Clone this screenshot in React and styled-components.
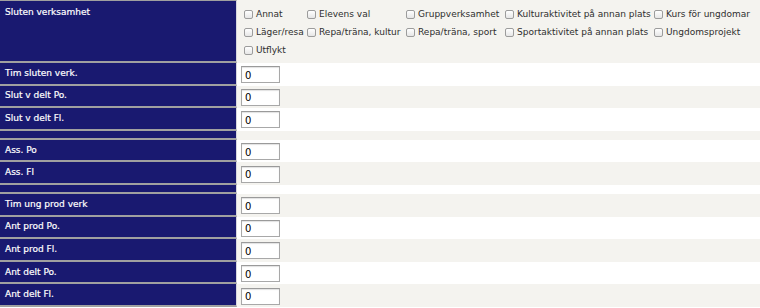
import styled, { createGlobalStyle } from 'styled-components';

// midnightblue label column, alternating field rows

const GlobalStyle = createGlobalStyle`
  body {
    margin: 0;
    background: #ffffff;
    font-family: "DejaVu Sans", Verdana, sans-serif;
  }
`;

const Form = styled.div`
  display: flex;
  flex-direction: column;
  width: 760px;
`;

const Row = styled.div`
  display: flex;
  height: ${(p) => p.$h}px;
  background: ${(p) => (p.$shade ? '#f4f3ef' : '#ffffff')};
`;

const Label = styled.div`
  box-sizing: border-box;
  display: flex;
  align-items: ${(p) => (p.$top ? 'flex-start' : 'center')};
  width: 237px;
  flex-shrink: 0;
  padding: ${(p) => (p.$top ? '6px' : '0')} 0 0 5px;
  background: #191970;
  color: #ffffff;
  font-size: 9px;
  line-height: 11px;
  -webkit-text-stroke: 0.2px #ffffff;
  border-top: ${(p) => (p.$first ? '1px solid #a0a0a0' : 'none')};
  border-bottom: 2px solid #a0a0a0;
  border-right: 1px solid #d6d6de;
`;

const Field = styled.div`
  display: flex;
  align-items: center;
  flex: 1;
  padding: 1px 0 0 4px;
`;

const NumInput = styled.input`
  box-sizing: border-box;
  width: 39px;
  height: 17px;
  margin: 0;
  padding: 1px 3px 0;
  border: 1px solid #a8a8a8;
  border-top-color: #9a9a9a;
  box-shadow: inset 0 1px 1px #e2e2e2;
  background: #ffffff;
  font-family: "DejaVu Sans", Verdana, sans-serif;
  font-size: 10px;
  color: #000000;
  outline: none;
`;

const Choices = styled.div`
  display: grid;
  grid-template-columns: 63px 99px 99px 149px auto;
  grid-auto-rows: 18px;
  align-self: flex-start;
  padding: 5px 0 0 7px;
`;

const Choice = styled.label`
  display: flex;
  align-items: center;
  gap: 3px;
  font-size: 9px;
  color: #2e2e2e;
  white-space: nowrap;
`;

const Box = styled.span`
  box-sizing: border-box;
  width: 9px;
  height: 9px;
  flex-shrink: 0;
  border: 1px solid #9c9c9c;
  border-radius: 2px;
  background: linear-gradient(#ffffff, #e6e6e6);
`;

const choices = [
  'Annat',
  'Elevens val',
  'Gruppverksamhet',
  'Kulturaktivitet på annan plats',
  'Kurs för ungdomar',
  'Läger/resa',
  'Repa/träna, kultur',
  'Repa/träna, sport',
  'Sportaktivitet på annan plats',
  'Ungdomsprojekt',
  'Utflykt',
];

const rows = [
  'Tim sluten verk.',
  'Slut v delt Po.',
  'Slut v delt Fl.',
  null,
  'Ass. Po',
  'Ass. Fl',
  null,
  'Tim ung prod verk',
  'Ant prod Po.',
  'Ant prod Fl.',
  'Ant delt Po.',
  'Ant delt Fl.',
];

const App = () => {
  return (
    <>
      <GlobalStyle />
      <Form>
        <Row $h={63} $shade>
          <Label $top $first>
            Sluten verksamhet
          </Label>
          <Choices>
            {choices.map((c) => (
              <Choice key={c}>
                <Box />
                {c}
              </Choice>
            ))}
          </Choices>
        </Row>
        {rows.map((r, i) => (
          <Row key={i} $h={r ? 22.6 : 9} $shade={i % 2 === 1}>
            <Label>{r}</Label>
            {r && (
              <Field>
                <NumInput defaultValue="0" />
              </Field>
            )}
          </Row>
        ))}
      </Form>
    </>
  );
};

export default App;
